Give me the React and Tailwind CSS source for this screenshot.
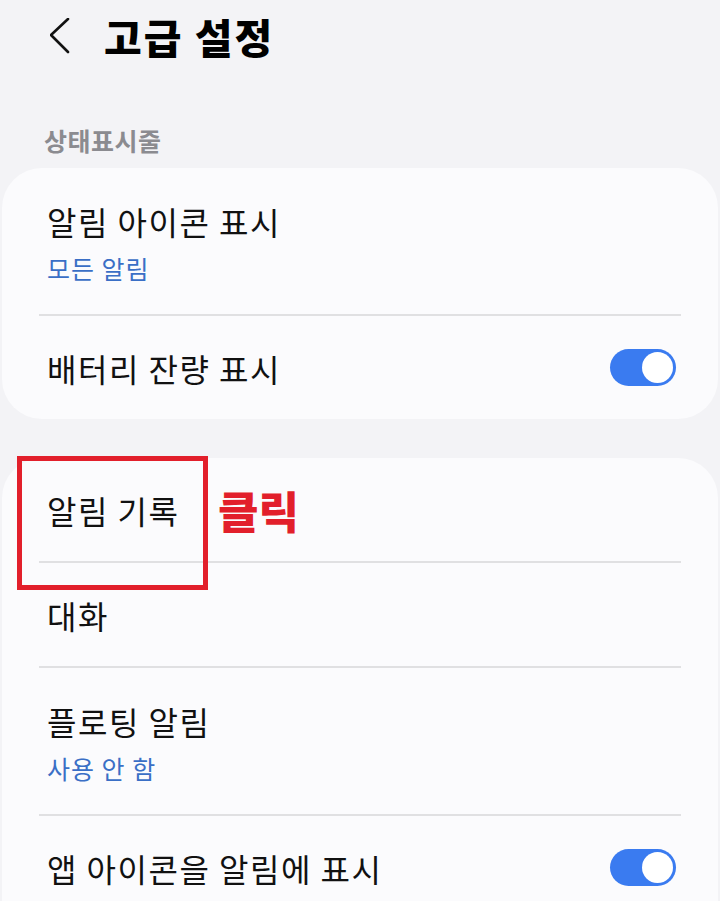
import React from "react";

const font = { fontFamily: '"Noto Sans CJK KR", "Noto Sans", sans-serif' };

function Toggle() {
  return (
    <div className="w-[66px] h-[37px] rounded-full bg-[#3a7bf0] flex items-center justify-end pr-[3px] shrink-0">
      <div className="w-[31px] h-[31px] rounded-full bg-white" />
    </div>
  );
}

function Divider() {
  return <div className="mx-[37px] h-[2px] bg-[#e0e0e2]" />;
}

function SingleRow({ title, toggle }) {
  return (
    <div className="h-[103px] flex items-center justify-between pl-[45px] pr-[42px]">
      <span className="text-[32px] leading-[40px] tracking-[1.5px] text-[#111]">{title}</span>
      {toggle && <Toggle />}
    </div>
  );
}

function DoubleRow({ title, sub }) {
  return (
    <div className="pl-[45px] pr-[42px] pt-[31px] pb-[29px] flex flex-col">
      <span className="text-[32px] leading-[44px] tracking-[1.5px] text-[#111]">{title}</span>
      <span className="mt-[8px] text-[25px] leading-[34px] tracking-[1px] text-[#3a6fc6]">{sub}</span>
    </div>
  );
}

export default function App() {
  return (
    <div className="w-[720px] h-[901px] bg-[#f3f3f6] overflow-hidden" style={font}>
      <div className="h-[72px] flex items-center pl-[50px]">
        <svg width="20" height="36" viewBox="0 0 20 36" className="shrink-0">
          <polyline points="18,1 1,17 18,34" fill="none" stroke="#111" strokeWidth="2.6" strokeLinecap="round" strokeLinejoin="round" />
        </svg>
        <span className="ml-[34px] text-[41px] leading-[48px] tracking-[2px] font-extrabold text-black">고급 설정</span>
      </div>
      <div className="pt-[50px] pb-[10px] pl-[44px] text-[25px] leading-[36px] tracking-[0.5px] font-semibold text-[#8b8b90]">상태표시줄</div>
      <div className="mx-[2px] rounded-[40px] bg-[#fbfbfd]">
        <DoubleRow title="알림 아이콘 표시" sub="모든 알림" />
        <Divider />
        <SingleRow title="배터리 잔량 표시" toggle />
      </div>
      <div className="mt-[39px] mx-[2px] rounded-t-[40px] bg-[#fbfbfd] relative">
        <SingleRow title="알림 기록" />
        <Divider />
        <SingleRow title="대화" />
        <Divider />
        <DoubleRow title="플로팅 알림" sub="사용 안 함" />
        <Divider />
        <SingleRow title="앱 아이콘을 알림에 표시" toggle />
        <div className="absolute left-[15px] top-[-2px] w-[191px] h-[134px] border-[5px] border-[#e21f2b]" />
        <span className="absolute left-[216px] top-[22px] text-[44px] leading-[60px] font-black text-[#e21f2b]">클릭</span>
      </div>
    </div>
  );
}
